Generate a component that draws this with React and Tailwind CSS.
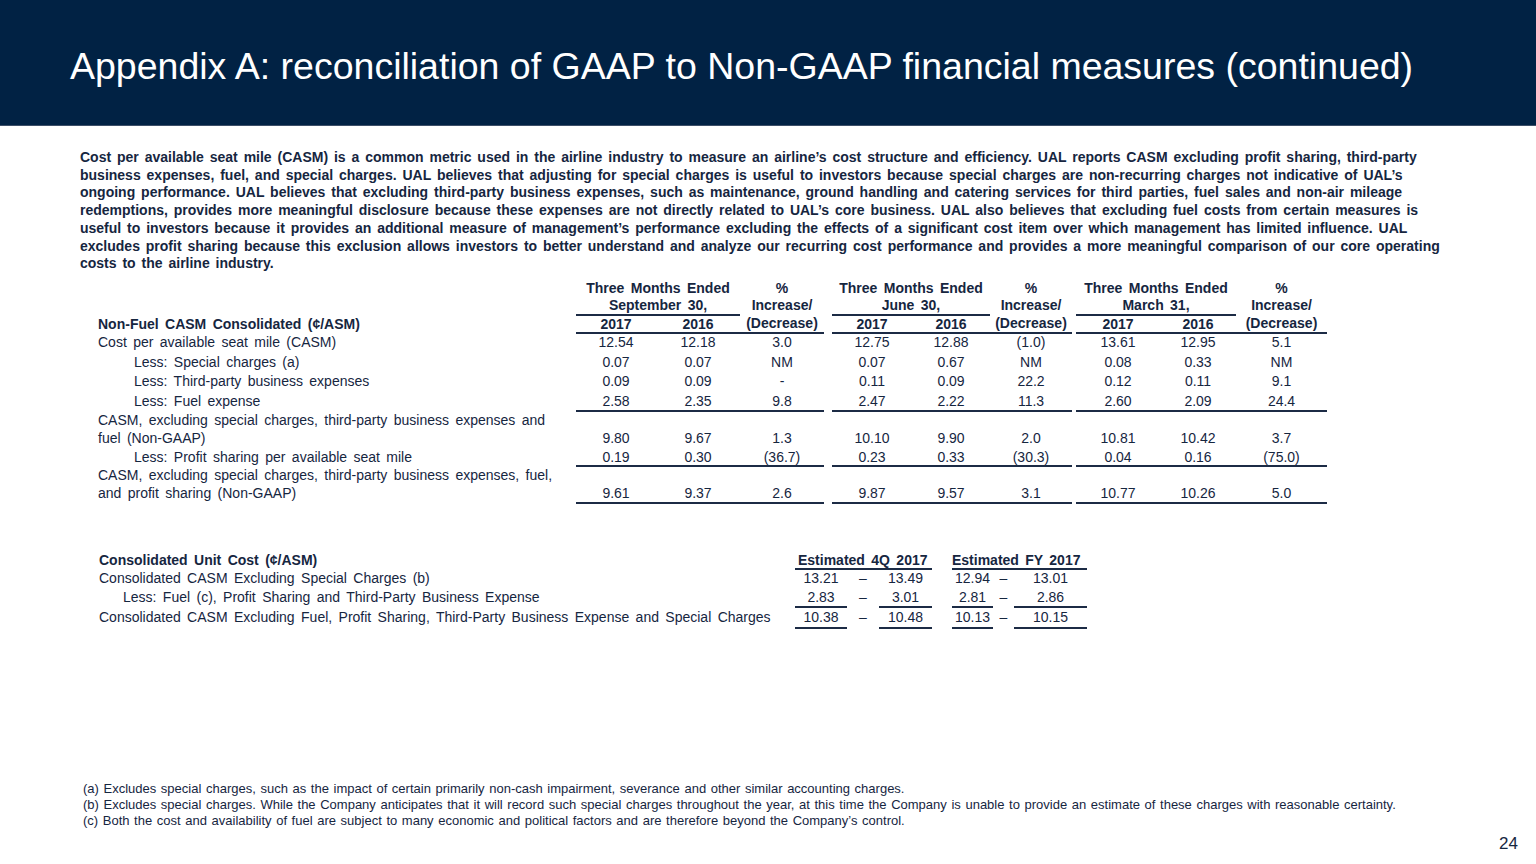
import React from 'react';

const groups = [
  { title: 'September 30,', wrap: 'ml-0', cols: ['w-[80px]', 'w-[84px]', 'w-[84px]'] },
  { title: 'June 30,', wrap: 'ml-[8px]', cols: ['w-[80px]', 'w-[78px]', 'w-[82px]'] },
  { title: 'March 31,', wrap: 'ml-[4px]', cols: ['w-[84px]', 'w-[76px]', 'w-[91px]'] },
];

const casmRows = [
  { label: ['Cost per available seat mile (CASM)'], vals: [['12.54', '12.18', '3.0'], ['12.75', '12.88', '(1.0)'], ['13.61', '12.95', '5.1']] },
  { label: ['Less: Special charges (a)'], indent: true, vals: [['0.07', '0.07', 'NM'], ['0.07', '0.67', 'NM'], ['0.08', '0.33', 'NM']] },
  { label: ['Less: Third-party business expenses'], indent: true, vals: [['0.09', '0.09', '-'], ['0.11', '0.09', '22.2'], ['0.12', '0.11', '9.1']] },
  { label: ['Less: Fuel expense'], indent: true, line: true, vals: [['2.58', '2.35', '9.8'], ['2.47', '2.22', '11.3'], ['2.60', '2.09', '24.4']] },
  { label: ['CASM, excluding special charges, third-party business expenses and', 'fuel (Non-GAAP)'], vals: [['9.80', '9.67', '1.3'], ['10.10', '9.90', '2.0'], ['10.81', '10.42', '3.7']] },
  { label: ['Less: Profit sharing per available seat mile'], indent: true, line: true, short: true, vals: [['0.19', '0.30', '(36.7)'], ['0.23', '0.33', '(30.3)'], ['0.04', '0.16', '(75.0)']] },
  { label: ['CASM, excluding special charges, third-party business expenses, fuel,', 'and profit sharing (Non-GAAP)'], line: true, vals: [['9.61', '9.37', '2.6'], ['9.87', '9.57', '3.1'], ['10.77', '10.26', '5.0']] },
];

const unitRows = [
  { label: 'Consolidated CASM Excluding Special Charges (b)', lead: 'leading-[17px]', vals: ['13.21', '13.49', '12.94', '13.01'] },
  { label: 'Less: Fuel (c), Profit Sharing and Third-Party Business Expense', lead: 'leading-[17px]', indent: true, line: true, vals: ['2.83', '3.01', '2.81', '2.86'] },
  { label: 'Consolidated CASM Excluding Fuel, Profit Sharing, Third-Party Business Expense and Special Charges', lead: 'leading-[19px]', line: true, vals: ['10.38', '10.48', '10.13', '10.15'] },
];

const intro = [
  'Cost per available seat mile (CASM) is a common metric used in the airline industry to measure an airline’s cost structure and efficiency. UAL reports CASM excluding profit sharing, third-party',
  'business expenses, fuel, and special charges. UAL believes that adjusting for special charges is useful to investors because special charges are non-recurring charges not indicative of UAL’s',
  'ongoing performance. UAL believes that excluding third-party business expenses, such as maintenance, ground handling and catering services for third parties, fuel sales and non-air mileage',
  'redemptions, provides more meaningful disclosure because these expenses are not directly related to UAL’s core business. UAL also believes that excluding fuel costs from certain measures is',
  'useful to investors because it provides an additional measure of management’s performance excluding the effects of a significant cost item over which management has limited influence. UAL',
  'excludes profit sharing because this exclusion allows investors to better understand and analyze our recurring cost performance and provides a more meaningful comparison of our core operating',
  'costs to the airline industry.',
];

const CasmTable = () => (
  <div className="mt-[7px] pl-[98px] text-[14px] [word-spacing:2.5px]">
    {/* header */}
    <div className="flex items-end">
      <div className="w-[478px] font-bold leading-[17px] pb-[1px]">Non-Fuel CASM Consolidated (¢/ASM)</div>
      {groups.map((g) => (
        <div key={g.title} className={`${g.wrap} flex font-bold border-b-2 border-[#1c2b45]`}>
          <div className="flex flex-col">
            <div className="text-center leading-[17px] border-b-2 border-[#1c2b45]">
              <div>Three Months Ended</div>
              <div>{g.title}</div>
            </div>
            <div className="flex leading-[16.5px]">
              <div className={`${g.cols[0]} text-center`}>2017</div>
              <div className={`${g.cols[1]} text-center`}>2016</div>
            </div>
          </div>
          <div className={`${g.cols[2]} text-center leading-[17.5px]`}>
            <div>%</div>
            <div>Increase/</div>
            <div>(Decrease)</div>
          </div>
        </div>
      ))}
    </div>
    {/* body */}
    {casmRows.map((r, i) => (
      <div key={i} className={`flex items-end ${r.short ? 'leading-[16px]' : 'leading-[17.5px]'}`}>
        <div className={`w-[478px] pb-[2px] ${r.indent ? 'pl-[36px]' : ''}`}>
          {r.label.map((l) => (
            <div key={l} className="whitespace-nowrap">{l}</div>
          ))}
        </div>
        {groups.map((g, gi) => (
          <div key={g.title} className={`${g.wrap} flex border-b-2 ${r.line ? 'border-[#1c2b45]' : 'border-transparent'}`}>
            {r.vals[gi].map((v, vi) => (
              <div key={vi} className={`${g.cols[vi]} text-center`}>{v}</div>
            ))}
          </div>
        ))}
      </div>
    ))}
  </div>
);

const UnitTable = () => (
  <div className="mt-[49px] pl-[99px] text-[14px] [word-spacing:2.5px]">
    <div className="flex items-end leading-[15px]">
      <div className="w-[696px] font-bold pb-[2px]">Consolidated Unit Cost (¢/ASM)</div>
      <div className="w-[137px] pl-[3px] font-bold border-b-2 border-[#1c2b45] whitespace-nowrap">Estimated 4Q 2017</div>
      <div className="ml-[20px] w-[135px] font-bold border-b-2 border-[#1c2b45] whitespace-nowrap">Estimated FY 2017</div>
    </div>
    {unitRows.map((r) => {
      const lineCls = r.line ? 'border-[#1c2b45]' : 'border-transparent';
      return (
        <div key={r.label} className={`flex items-end ${r.lead}`}>
          <div className={`w-[696px] pb-[2px] whitespace-nowrap ${r.indent ? 'pl-[24px]' : ''}`}>{r.label}</div>
          <div className={`w-[52px] text-center border-b-2 ${lineCls}`}>{r.vals[0]}</div>
          <div className="w-[32px] text-center border-b-2 border-transparent">–</div>
          <div className={`w-[53px] text-center border-b-2 ${lineCls}`}>{r.vals[1]}</div>
          <div className={`ml-[20px] w-[41px] text-center border-b-2 ${lineCls}`}>{r.vals[2]}</div>
          <div className="w-[21px] text-center border-b-2 border-transparent">–</div>
          <div className={`w-[73px] text-center border-b-2 ${lineCls}`}>{r.vals[3]}</div>
        </div>
      );
    })}
  </div>
);

const App = () => {
  return (
    <div className="w-[1536px] h-[864px] bg-white flex flex-col overflow-hidden font-['Liberation_Sans',Arial,sans-serif] text-[#16263f]">
      <header className="h-[126px] shrink-0 bg-[#012244] border-b border-[#3d4f68] flex items-center pl-[70px] pt-[6px]">
        <h1 className="text-white text-[37.5px] leading-[40px] whitespace-nowrap">
          Appendix A: reconciliation of GAAP to Non-GAAP financial measures (continued)
        </h1>
      </header>

      <section className="mt-[23px] pl-[80px] font-bold text-[14px] leading-[17.7px] [word-spacing:2px]">
        {intro.map((line) => (
          <p key={line} className="whitespace-nowrap">{line}</p>
        ))}
      </section>

      <CasmTable />
      <UnitTable />

      <section className="mt-auto pl-[83px] text-[13px] leading-[16px] [word-spacing:1px]">
        <p>(a) Excludes special charges, such as the impact of certain primarily non-cash impairment, severance and other similar accounting charges.</p>
        <p>(b) Excludes special charges. While the Company anticipates that it will record such special charges throughout the year, at this time the Company is unable to provide an estimate of these charges with reasonable certainty.</p>
        <p>(c) Both the cost and availability of fuel are subject to many economic and political factors and are therefore beyond the Company’s control.</p>
      </section>
      <div className="flex justify-end pr-[18px] pb-[10px] pt-[5px] text-[17px] leading-[20px]">24</div>
    </div>
  );
};

export default App;
